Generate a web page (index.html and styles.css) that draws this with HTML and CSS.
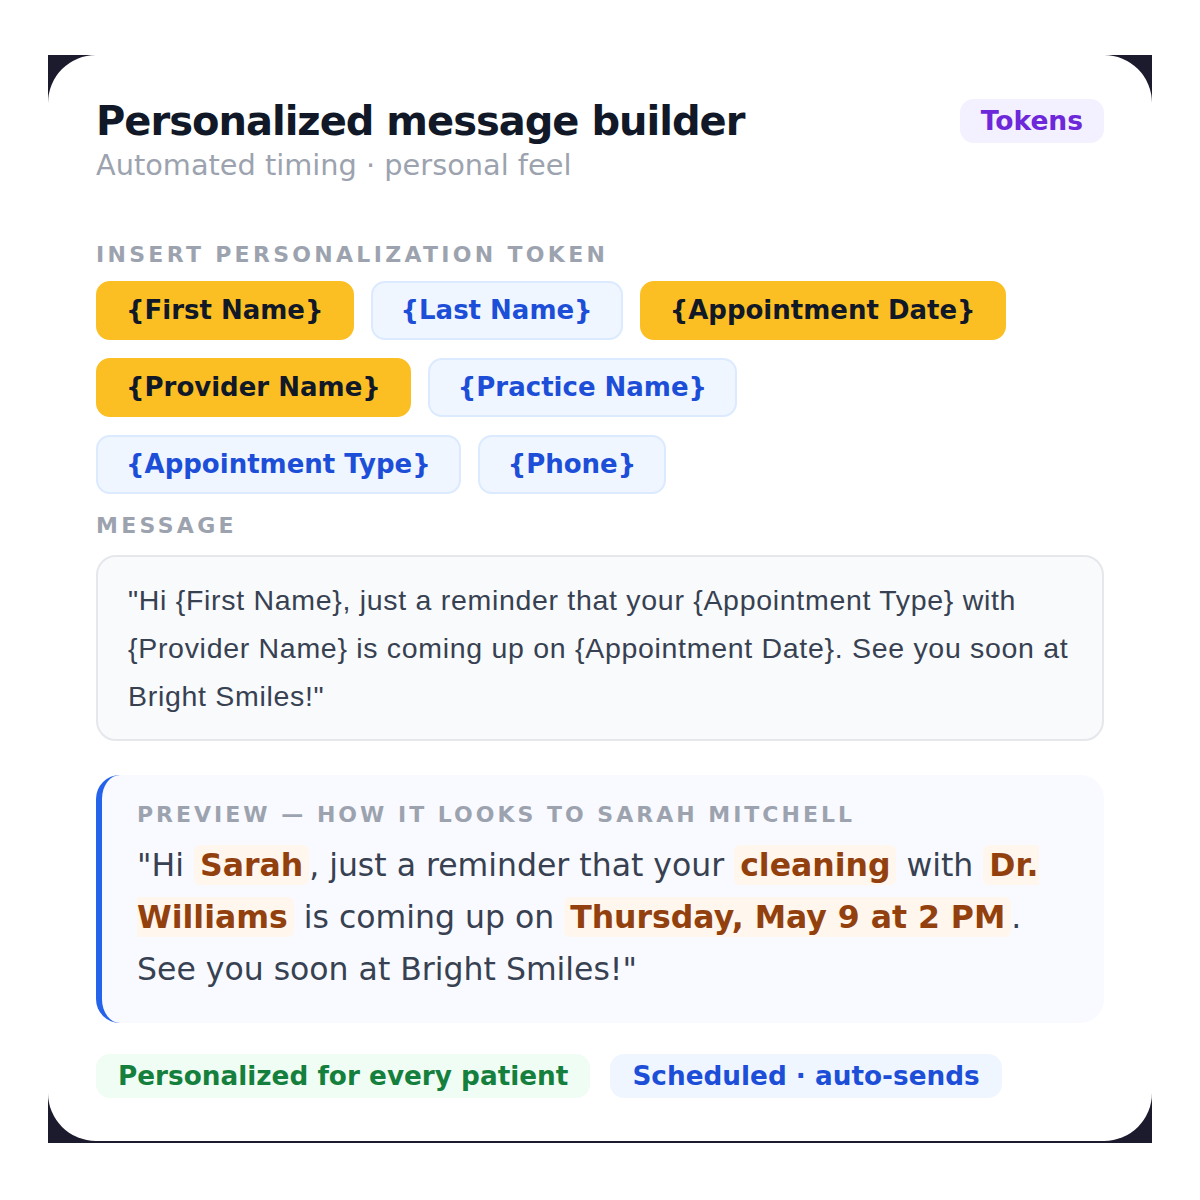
FILE: index.html
```html
<!DOCTYPE html>
<html>
<head>
<meta charset="utf-8">
<link rel="stylesheet" href="styles.css">
</head>
<body>
<div class="frame">
  <div class="card">
    <div class="header">
      <div>
        <h1 class="title">Personalized message builder</h1>
        <div class="subtitle">Automated timing · personal feel</div>
      </div>
      <span class="badge">Tokens</span>
    </div>

    <div class="label label-tokens">INSERT PERSONALIZATION TOKEN</div>
    <div class="chips">
      <span class="chip chip-on">{First Name}</span>
      <span class="chip">{Last Name}</span>
      <span class="chip chip-on">{Appointment Date}</span>
      <span class="chip chip-on">{Provider Name}</span>
      <span class="chip">{Practice Name}</span>
      <span class="chip">{Appointment Type}</span>
      <span class="chip">{Phone}</span>
    </div>

    <div class="label label-message">MESSAGE</div>
    <div class="message">"Hi {First Name}, just a reminder that your {Appointment Type} with {Provider Name} is coming up on {Appointment Date}. See you soon at Bright Smiles!"</div>

    <div class="preview">
      <div class="label label-preview">PREVIEW — HOW IT LOOKS TO SARAH MITCHELL</div>
      <p class="preview-text">"Hi <span class="hl">Sarah</span>, just a reminder that your <span class="hl">cleaning</span> with <span class="hl">Dr. Williams</span> is coming up on <span class="hl">Thursday, May 9 at 2 PM</span>. See you soon at Bright Smiles!"</p>
    </div>

    <div class="tags">
      <span class="tag tag-green">Personalized for every patient</span>
      <span class="tag tag-blue">Scheduled · auto-sends</span>
    </div>
  </div>
</div>
</body>
</html>
```

FILE: styles.css
```css
* { box-sizing: border-box; }
html, body { margin: 0; padding: 0; background: #ffffff; }
body { font-family: "DejaVu Sans", sans-serif; }

.frame {
  margin: 55px 48px 0;
  width: 1104px;
  height: 1088px;
  background: #1c1b2e;
  padding-bottom: 2px;
}
.card {
  background: #ffffff;
  border-radius: 48px;
  height: 100%;
  padding: 42px 48px 0;
}

.header {
  display: flex;
  justify-content: space-between;
  align-items: flex-start;
}
.title {
  margin: 0;
  font-size: 40px;
  line-height: 48px;
  font-weight: 700;
  letter-spacing: -1px;
  color: #111827;
}
.subtitle {
  font-size: 28.8px;
  line-height: 36px;
  color: #9ca3af;
  margin-top: 2px;
}
.badge {
  margin-top: 2px;
  background: #f3f0ff;
  color: #6d28d9;
  font-weight: 700;
  font-size: 26.5px;
  line-height: 44px;
  padding: 0 21px;
  border-radius: 14px;
}

.label {
  font-size: 22px;
  font-weight: 700;
  letter-spacing: 3.3px;
  color: #9ca3af;
  line-height: 28px;
}
.label-tokens { margin-top: 58px; }
.label-message { margin-top: 18px; }

.chips {
  display: flex;
  flex-wrap: wrap;
  gap: 18px 17px;
  margin-top: 12px;
}
.chip {
  display: inline-block;
  height: 59px;
  line-height: 55px;
  padding: 0 28px;
  border: 2px solid #dbeafe;
  background: #eff6ff;
  color: #1d4ed8;
  font-size: 26px;
  font-weight: 700;
  border-radius: 14px;
}
.chip-on {
  background: #fbbf24;
  border-color: #fbbf24;
  color: #111827;
}

.message {
  margin-top: 15px;
  background: #f8fafc;
  border: 2px solid #e5e7eb;
  border-radius: 20px;
  padding: 19px 30px 19px;
  font-family: "Liberation Sans", Arial, sans-serif;
  font-size: 28.5px;
  letter-spacing: 0.7px;
  line-height: 48px;
  color: #374151;
}

.preview {
  margin-top: 34px;
  background: #f8faff;
  border-left: 6px solid #2563eb;
  border-radius: 24px;
  padding: 26px 40px 28px 35px;
}
.label-preview { letter-spacing: 3px; }
.preview-text {
  margin: 10px 0 0;
  font-size: 31.5px;
  line-height: 52px;
  color: #374151;
}
.hl {
  background: #fff7ed;
  color: #92400e;
  font-weight: 700;
  padding: 2px 6px;
  border-radius: 6px;
}

.tags {
  display: flex;
  gap: 20px;
  margin-top: 31px;
}
.tag {
  font-size: 26.3px;
  font-weight: 700;
  line-height: 44px;
  padding: 0 22px;
  border-radius: 14px;
}
.tag-green { background: #f0fdf4; color: #15803d; }
.tag-blue { background: #eff6ff; color: #1d4ed8; }
```
